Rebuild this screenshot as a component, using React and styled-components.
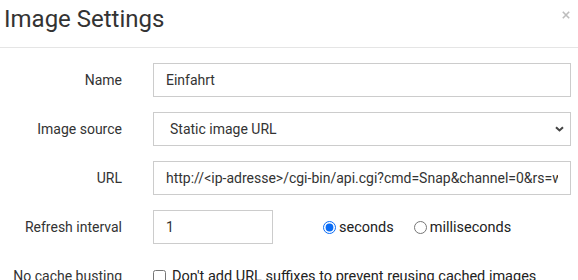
import React from "react";
import styled, { createGlobalStyle } from "styled-components";

const Global = createGlobalStyle`
  html, body { margin: 0; padding: 0; background: #fff; }
  body { font-family: Roboto, "Liberation Sans", Arial, sans-serif; color: #333; overflow: hidden; }
  * { box-sizing: border-box; }
`;

const Dialog = styled.div`
  width: 578px;
  height: 280px;
  overflow: hidden;
  background: #fff;
`;

const Header = styled.div`
  height: 48px;
  display: flex;
  align-items: flex-start;
  justify-content: space-between;
  border-bottom: 1px solid #e5e5e5;
  padding: 4px 0 0 4px;
`;

const Title = styled.h4`
  margin: 0;
  font-size: 24px;
  font-weight: 400;
  line-height: 30px;
  color: #333;
`;

const Close = styled.button`
  border: 0;
  background: none;
  padding: 0;
  margin: 7px 8px 0 0;
  width: 8px;
  height: 8px;
  cursor: pointer;
  display: flex;
`;

const Body = styled.div`
  padding: 15px 0 0 0;
  display: flex;
  flex-direction: column;
  gap: 15px;
`;

const Row = styled.div`
  display: grid;
  grid-template-columns: 122px 1fr;
  column-gap: 31px;
  align-items: center;
  min-height: 34px;
`;

const Label = styled.label`
  text-align: right;
  font-size: 14px;
  color: #333;
`;

const Field = styled.div`
  display: flex;
  align-items: center;
  width: ${(p) => p.$w || "418px"};
`;

const Input = styled.input`
  width: ${(p) => p.$w || "418px"};
  height: 34px;
  border: 1px solid #ccc;
  border-radius: 0;
  padding: 0 12px;
  font-family: Roboto, "Liberation Sans", Arial, sans-serif;
  font-size: 14px;
  color: #333;
  background: #fff;
  outline: none;
`;

const SelectWrap = styled.div`
  position: relative;
  width: 418px;
  height: 34px;
`;

const Select = styled.select`
  appearance: none;
  width: 100%;
  height: 34px;
  border: 1px solid #ccc;
  border-radius: 0;
  padding: 0 30px 0 16px;
  font-family: Roboto, "Liberation Sans", Arial, sans-serif;
  font-size: 14px;
  color: #333;
  background: #fff;
  outline: none;
`;

const Chevron = styled.svg`
  position: absolute;
  right: 7px;
  top: 14px;
  pointer-events: none;
`;

const Radios = styled.div`
  display: flex;
  align-items: center;
  margin-left: 50px;
  gap: 20px;
`;

const RadioLabel = styled.label`
  display: flex;
  align-items: center;
  gap: 3px;
  font-size: 14.5px;
  color: #222;
`;

const Radio = styled.input`
  margin: 0;
  width: 13px;
  height: 13px;
  accent-color: #0a6cf5;
`;

const CheckLabel = styled.label`
  display: flex;
  align-items: center;
  gap: 6px;
  font-size: 14.5px;
  color: #222;
`;

const Check = styled.input`
  margin: 0;
  width: 13px;
  height: 13px;
`;

export default function App() {
  return (
    <Dialog>
      <Global />
      <Header>
        <Title>Image Settings</Title>
        <Close aria-label="Close">
          <svg width="8" height="8" viewBox="0 0 8 8">
            <path d="M0.8 0.8L7.2 7.2M7.2 0.8L0.8 7.2" stroke="#bdbdbd" strokeWidth="1.6" />
          </svg>
        </Close>
      </Header>
      <Body>
        <Row>
          <Label>Name</Label>
          <Input defaultValue="Einfahrt" />
        </Row>
        <Row>
          <Label>Image source</Label>
          <SelectWrap>
            <Select defaultValue="static">
              <option value="static">Static image URL</option>
            </Select>
            <Chevron width="9" height="6" viewBox="0 0 9 6">
              <path d="M1 1.2L4.5 4.5L8 1.2" stroke="#444" strokeWidth="2" fill="none" />
            </Chevron>
          </SelectWrap>
        </Row>
        <Row>
          <Label>URL</Label>
          <Input defaultValue="http://<ip-adresse>/cgi-bin/api.cgi?cmd=Snap&channel=0&rs=wuuPhkmUCeI9WG7C&user=admin&password=" />
        </Row>
        <Row>
          <Label>Refresh interval</Label>
          <Field>
            <Input $w="120px" defaultValue="1" />
            <Radios>
              <RadioLabel>
                <Radio type="radio" name="unit" defaultChecked />
                seconds
              </RadioLabel>
              <RadioLabel>
                <Radio type="radio" name="unit" />
                milliseconds
              </RadioLabel>
            </Radios>
          </Field>
        </Row>
        <Row>
          <Label>No cache busting</Label>
          <CheckLabel>
            <Check type="checkbox" />
            Don't add URL suffixes to prevent reusing cached images
          </CheckLabel>
        </Row>
      </Body>
    </Dialog>
  );
}
